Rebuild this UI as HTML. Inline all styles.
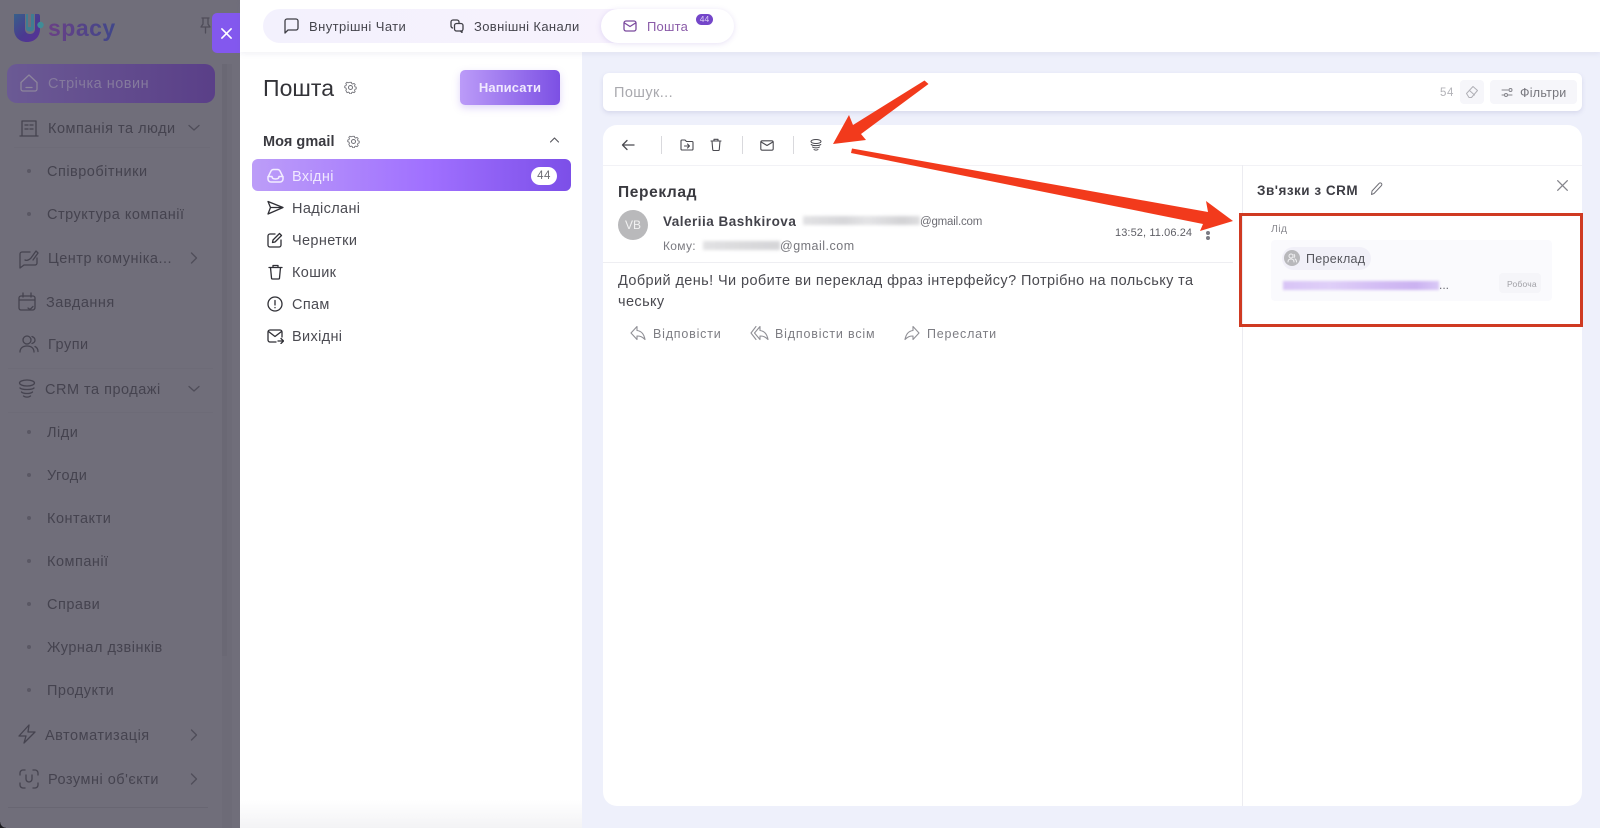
<!DOCTYPE html>
<html lang="uk"><head><meta charset="utf-8"><title>Пошта</title>
<style>
*{box-sizing:border-box}
html,body{margin:0;padding:0;width:1600px;height:828px;overflow:hidden;background:#fff}
body{font-family:"Liberation Sans",sans-serif;position:relative;color:#3f3f46}
.a{position:absolute;white-space:nowrap}
.t{position:absolute;white-space:nowrap;line-height:20px;transform:translateY(-9px)}
svg.i{position:absolute;fill:none;stroke:currentColor;stroke-width:1.6;stroke-linecap:round;stroke-linejoin:round}
#root{position:absolute;inset:0;filter:blur(.35px)}
.s{color:#45434f;font-size:14.5px;letter-spacing:.5px}
.dot{position:absolute;width:4px;height:4px;border-radius:50%;background:#5a5864;left:27px}
.m{font-size:14.5px;letter-spacing:.35px;color:#4b4b52;left:292px}
</style></head><body><div id="root">

<!-- sidebar -->
<div class="a" style="left:0;top:0;width:240px;height:828px;background:#706e7a"></div>
<div class="a" style="left:222px;top:64px;width:10px;height:764px;background:#6d6b77"></div>
<div class="a" style="left:222px;top:64px;width:5px;height:592px;background:#6a6874"></div>
<div class="a" style="left:7px;top:64px;width:208px;height:39px;border-radius:10px;background:linear-gradient(90deg,#6b5a94,#5a3f88)"></div>
<div class="a" style="left:14px;top:147px;width:196px;height:1px;background:#6d6b77"></div>
<div class="a" style="left:8px;top:368px;width:205px;height:1px;background:#6d6b77"></div>
<div class="a" style="left:8px;top:412px;width:205px;height:1px;background:#6d6b77"></div>
<div class="a" style="left:8px;top:807px;width:200px;height:1px;background:#686672"></div>
<div class="a" style="left:0;top:822px;width:6px;height:6px;background:radial-gradient(circle at 100% 0,transparent 5.500px,#1c1c20 6px)"></div>

<!-- logo -->
<svg class="a" style="left:13px;top:12px" width="106" height="32" viewBox="0 0 106 32">
<defs><linearGradient id="lg" x1="0" y1="0" x2="1" y2="1"><stop offset="0" stop-color="#37608a"/><stop offset=".55" stop-color="#4a3a90"/><stop offset="1" stop-color="#5a2f98"/></linearGradient>
<linearGradient id="ts" x1="0" y1="0" x2="1" y2="0"><stop offset="0" stop-color="#6a3f86"/><stop offset="1" stop-color="#40478a"/></linearGradient></defs>
<path d="M1 2h11v15c0 3 2 5 5 5s5-2 5-5V2h3c1.500 0 2 1 2 2.500V17c0 8-5.500 13-13 13S1 25 1 17z" fill="url(#lg)"/>
<path d="M13 2h8v14c0 2.200-1.500 3.500-4 3.500S13 18.200 13 16z" fill="#3f7d92"/>
<rect x="15" y="1" width="3" height="14" fill="#706e7a"/>
<circle cx="27.500" cy="13" r="3.200" fill="#3f8d97"/>
<text x="35" y="24" font-family="Liberation Sans,sans-serif" font-size="23" font-weight="700" letter-spacing=".5" fill="url(#ts)">spacy</text>
</svg>
<svg class="i" style="left:198px;top:16px;color:#4f4d59;stroke-width:1.300" width="15" height="18" viewBox="0 0 15 18"><path d="M4 2h7M5 2v6L3 11h9l-2-3V2M7.500 11v6"/></svg>
<div class="a" style="left:212px;top:13px;width:28px;height:40px;background:#8358ee;border-radius:5px 0 0 5px"></div>
<svg class="i" style="left:221px;top:28px;color:#fff;stroke-width:1.800" width="11" height="11" viewBox="0 0 12 12"><path d="M1 1l10 10M11 1L1 11"/></svg>

<svg class="i" style="left:19px;top:73px;color:#8d859c;stroke-width:1.300" width="20" height="20" viewBox="0 0 20 20"><path d="M2 9.500 10 2l8 7.500V16a2 2 0 0 1-2 2H4a2 2 0 0 1-2-2zM7 14.500h6"/></svg>
<div class="t s" style="left:48px;top:83px;color:#857a9d">Стрічка новин</div>

<svg class="i" style="left:19px;top:119px;color:#45434f;stroke-width:1.300" width="20" height="18" viewBox="0 0 20 18"><path d="M1 17h18M3 17V2h14v15M6 6h3M11 6h3M6 10h3M11 10h3"/></svg>
<div class="t s" style="left:48px;top:128px">Компанія та люди</div>
<svg class="i" style="left:188px;top:124px;color:#4f4d59;stroke-width:1.300" width="12" height="8" viewBox="0 0 12 8"><path d="M1 1.500 6 6l5-4.500"/></svg>

<span class="dot" style="top:169px"></span><div class="t s" style="left:47px;top:171px">Співробітники</div>
<span class="dot" style="top:212px"></span><div class="t s" style="left:47px;top:214px">Структура компанії</div>

<svg class="i" style="left:19px;top:248px;color:#45434f;stroke-width:1.300" width="20" height="21" viewBox="0 0 20 21"><path d="M11 4H3a2 2 0 0 0-2 2v14l4-3h11a2 2 0 0 0 2-2V10M6 12c2 1 4 0 6-2l5-7 2 2-5 7"/></svg>
<div class="t s" style="left:48px;top:258px">Центр комуніка...</div>
<svg class="i" style="left:190px;top:252px;color:#4f4d59;stroke-width:1.300" width="8" height="12" viewBox="0 0 8 12"><path d="M1.500 1 6.500 6l-5 5"/></svg>

<svg class="i" style="left:18px;top:292px;color:#45434f;stroke-width:1.300" width="18" height="20" viewBox="0 0 18 20"><path d="M1 6a2 2 0 0 1 2-2h12a2 2 0 0 1 2 2v9a3 3 0 0 1-2 3H3a2 2 0 0 1-2-2zM1 8h16M5 1v4M13 1v4M10 16l2 1.500 3-3"/></svg>
<div class="t s" style="left:46px;top:302px">Завдання</div>

<svg class="i" style="left:19px;top:335px;color:#45434f;stroke-width:1.300" width="20" height="18" viewBox="0 0 20 18"><circle cx="8" cy="5" r="4"/><path d="M1 17c0-4 3-6 7-6s7 2 7 6M13 1.500c2 .8 3 2 3 3.500s-1 2.800-3 3.500M16 11.500c2 1 3 3 3 5"/></svg>
<div class="t s" style="left:48px;top:344px">Групи</div>

<svg class="i" style="left:18px;top:379px;color:#45434f;stroke-width:1.300" width="18" height="20" viewBox="0 0 18 20"><ellipse cx="9" cy="4" rx="7.500" ry="3"/><path d="M2 9c2 2 12 2 14 0M3.500 13c2 2 9 2 11 0M5.500 17c2 1.500 5 1.500 7 0"/></svg>
<div class="t s" style="left:45px;top:389px">CRM та продажі</div>
<svg class="i" style="left:188px;top:385px;color:#4f4d59;stroke-width:1.300" width="12" height="8" viewBox="0 0 12 8"><path d="M1 1.500 6 6l5-4.500"/></svg>

<span class="dot" style="top:430px"></span><div class="t s" style="left:47px;top:432px">Ліди</div>
<span class="dot" style="top:473px"></span><div class="t s" style="left:47px;top:475px">Угоди</div>
<span class="dot" style="top:516px"></span><div class="t s" style="left:47px;top:518px">Контакти</div>
<span class="dot" style="top:559px"></span><div class="t s" style="left:47px;top:561px">Компанії</div>
<span class="dot" style="top:602px"></span><div class="t s" style="left:47px;top:604px">Справи</div>
<span class="dot" style="top:645px"></span><div class="t s" style="left:47px;top:647px">Журнал дзвінків</div>
<span class="dot" style="top:688px"></span><div class="t s" style="left:47px;top:690px">Продукти</div>

<svg class="i" style="left:18px;top:724px;color:#45434f;stroke-width:1.300" width="18" height="20" viewBox="0 0 18 20"><path d="M11 1 1 12h7l-2 7 11-11h-7z"/></svg>
<div class="t s" style="left:45px;top:735px">Автоматизація</div>
<svg class="i" style="left:190px;top:729px;color:#4f4d59;stroke-width:1.300" width="8" height="12" viewBox="0 0 8 12"><path d="M1.500 1 6.500 6l-5 5"/></svg>

<svg class="i" style="left:19px;top:769px;color:#45434f;stroke-width:1.300" width="20" height="20" viewBox="0 0 20 20"><path d="M1 6V4a3 3 0 0 1 3-3h2M14 1h2a3 3 0 0 1 3 3v2M1 14v2a3 3 0 0 0 3 3h2M14 19h2a3 3 0 0 0 3-3v-2M7 6v4a3 3 0 0 0 6 0V6"/></svg>
<div class="t s" style="left:48px;top:779px">Розумні об'єкти</div>
<svg class="i" style="left:190px;top:773px;color:#4f4d59;stroke-width:1.300" width="8" height="12" viewBox="0 0 8 12"><path d="M1.500 1 6.500 6l-5 5"/></svg>

<!-- main backgrounds -->
<div class="a" style="left:582px;top:52px;width:1018px;height:776px;background:#eef0fb"></div>
<div class="a" style="left:240px;top:800px;width:342px;height:28px;background:linear-gradient(180deg,#fff,#f3f3f5)"></div>
<div class="a" style="left:240px;top:0;width:1360px;height:52px;background:#fff;box-shadow:0 2px 5px rgba(120,120,170,.1)"></div>

<!-- tabs -->
<div class="a" style="left:263px;top:9px;width:440px;height:34px;border-radius:17px;background:linear-gradient(90deg,#f3f1fd,#f8f2fd)"></div>
<div class="a" style="left:601px;top:9px;width:133px;height:34px;border-radius:17px;background:#fff;box-shadow:0 1px 6px rgba(120,90,200,.18)"></div>
<svg class="i" style="left:284px;top:18px;color:#3f3f46;stroke-width:1.300" width="15" height="16" viewBox="0 0 15 16"><path d="M3 1h9a2 2 0 0 1 2 2v7a2 2 0 0 1-2 2H4l-3 3V3a2 2 0 0 1 2-2z"/></svg>
<div class="t" style="left:309px;top:26px;font-size:13px;letter-spacing:.42px;color:#45454d">Внутрішні Чати</div>
<svg class="i" style="left:450px;top:19px;color:#3f3f46;stroke-width:1.300" width="14" height="14" viewBox="0 0 14 14"><path d="M9 3.500V3a2 2 0 0 0-2-2H3a2 2 0 0 0-2 2v4c0 1 .5 1.500 1.500 2"/><rect x="4.500" y="4.500" width="8.500" height="7.500" rx="2"/><path d="m10.500 12 1.500 1.500V12"/></svg>
<div class="t" style="left:474px;top:26px;font-size:13px;letter-spacing:.36px;color:#45454d">Зовнішні Канали</div>
<svg class="i" style="left:623px;top:20px;color:#7b4a9e;stroke-width:1.300" width="14" height="12" viewBox="0 0 14 12"><rect x="1" y="1" width="12" height="10" rx="2"/><path d="m1.500 3 5.500 3.500L12.500 3"/></svg>
<div class="t" style="left:647px;top:26px;font-size:13px;letter-spacing:.2px;color:#8a5ba8">Пошта</div>
<div class="a" style="left:696px;top:14px;width:17px;height:11px;border-radius:6px;background:#7446c9;color:#ddd0f5;font-size:8.500px;line-height:11px;text-align:center">44</div>

<!-- left panel -->
<div class="t" style="left:263px;top:87px;font-size:23px;letter-spacing:.05px;color:#333338">Пошта</div>
<svg class="i" style="left:344px;top:81px;color:#6f6f76;stroke-width:1" width="13" height="13" viewBox="0 0 13 13"><path d="M5.500.8h2l.4 1.500 1.400.6 1.300-.8 1.400 1.400-.8 1.300.6 1.400 1.400.4v2l-1.400.4-.6 1.400.8 1.300-1.400 1.400-1.300-.8-1.400.6-.4 1.400h-2l-.4-1.400-1.400-.6-1.300.8L.9 10.300l.8-1.300-.6-1.400L-.3 7.200v-2l1.400-.4.6-1.400L.9 2.100 2.300.7l1.300.8 1.400-.6z" transform="translate(1 .6) scale(.85)"/><circle cx="6.500" cy="6.500" r="2"/></svg>
<div class="a" style="left:460px;top:70px;width:100px;height:35px;border-radius:5px;background:linear-gradient(90deg,#bb9bf8,#7c50e4);box-shadow:0 3px 8px rgba(130,90,230,.25);color:#f0e9fe;font-size:13px;font-weight:700;letter-spacing:.1px;line-height:36px;text-align:center">Написати</div>

<div class="t" style="left:263px;top:141px;font-size:14.500px;font-weight:700;letter-spacing:.05px;color:#3a3a40">Моя gmail</div>
<svg class="i" style="left:347px;top:135px;color:#6f6f76;stroke-width:1" width="13" height="13" viewBox="0 0 13 13"><path d="M5.500.8h2l.4 1.500 1.400.6 1.300-.8 1.400 1.400-.8 1.300.6 1.400 1.400.4v2l-1.400.4-.6 1.400.8 1.300-1.400 1.400-1.300-.8-1.400.6-.4 1.400h-2l-.4-1.400-1.400-.6-1.300.8L.9 10.300l.8-1.300-.6-1.400L-.3 7.200v-2l1.400-.4.6-1.400L.9 2.100 2.300.7l1.300.8 1.400-.6z" transform="translate(1 .6) scale(.85)"/><circle cx="6.500" cy="6.500" r="2"/></svg>
<svg class="i" style="left:550px;top:137px;color:#55555c;stroke-width:1.100" width="9" height="6" viewBox="0 0 9 6"><path d="M.5 5 4.500 1l4 4"/></svg>

<div class="a" style="left:252px;top:159px;width:319px;height:32px;border-radius:6px;background:linear-gradient(90deg,#bc9df8,#a070ff 55%,#7c4fe8)"></div>
<svg class="i" style="left:267px;top:168px;color:#f3edff;stroke-width:1.500" width="17" height="15" viewBox="0 0 17 15"><path d="M1 9 4 3a3 3 0 0 1 2.500-1.500h4A3 3 0 0 1 13 3l3 6v2a3 3 0 0 1-3 3H4a3 3 0 0 1-3-3zM1 8.500h4c0 2 1.500 2.500 3.500 2.500s3.500-.5 3.500-2.500h4"/></svg>
<div class="t m" style="top:176px;color:#f0e8ff">Вхідні</div>
<div class="a" style="left:531px;top:167px;width:26px;height:18px;border-radius:9px;background:#fff;color:#6b6b72;font-size:11.500px;letter-spacing:.5px;line-height:18px;text-align:center">44</div>

<svg class="i" style="left:267px;top:200px;color:#2f2f35;stroke-width:1.300" width="17" height="15" viewBox="0 0 17 15"><path d="M1 1.500 16 7.500 1 14l2.500-6.500zM3.500 7.500H16"/></svg>
<div class="t m" style="top:208px">Надіслані</div>
<svg class="i" style="left:267px;top:232px;color:#2f2f35;stroke-width:1.300" width="16" height="16" viewBox="0 0 16 16"><path d="M8 2H3a2 2 0 0 0-2 2v9a2 2 0 0 0 2 2h9a2 2 0 0 0 2-2V8"/><path d="M5.500 10.500 6 8l6.500-6.500 2 2L8 10z"/></svg>
<div class="t m" style="top:240px">Чернетки</div>
<svg class="i" style="left:268px;top:264px;color:#2f2f35;stroke-width:1.300" width="15" height="16" viewBox="0 0 15 16"><path d="M1 3.500h13M5 3.500V1.500h5v2M2.500 3.500l1 10.500a1 1 0 0 0 1 1h6a1 1 0 0 0 1-1l1-10.500"/></svg>
<div class="t m" style="top:272px">Кошик</div>
<svg class="i" style="left:267px;top:296px;color:#2f2f35;stroke-width:1.300" width="16" height="16" viewBox="0 0 16 16"><circle cx="8" cy="8" r="7"/><path d="M8 4.500V9M8 11.500v.2"/></svg>
<div class="t m" style="top:304px">Спам</div>
<svg class="i" style="left:267px;top:329px;color:#2f2f35;stroke-width:1.300" width="17" height="15" viewBox="0 0 17 15"><path d="M9 13H3a2 2 0 0 1-2-2V3a2 2 0 0 1 2-2h10a2 2 0 0 1 2 2v5"/><path d="m1.500 2.500 6.500 5 6.500-5M11 12h5M14 9.500l2.500 2.500-2.500 2.500"/></svg>
<div class="t m" style="top:336px">Вихідні</div>

<!-- search -->
<div class="a" style="left:603px;top:73px;width:979px;height:38px;border-radius:6px;background:#fff;box-shadow:0 2px 5px rgba(110,110,170,.18)"></div>
<div class="t" style="left:614px;top:92px;font-size:14.500px;letter-spacing:.4px;color:#a9a9ae">Пошук...</div>
<div class="t" style="left:1440px;top:92px;font-size:11.500px;letter-spacing:.6px;color:#b3b3b8">54</div>
<div class="a" style="left:1460px;top:80px;width:24px;height:24px;border-radius:4px;background:#f6f6fa"></div>
<svg class="i" style="left:1465px;top:85px;color:#b0b0b6;stroke-width:1" width="14" height="14" viewBox="0 0 14 14"><path d="M1.500 8.500 8 1.500l4.500 4-6 7H4zM4.500 5.500l5 4.500"/></svg>
<div class="a" style="left:1490px;top:80px;width:87px;height:24px;border-radius:4px;background:#f6f6fa"></div>
<svg class="i" style="left:1501px;top:87px;color:#85858c;stroke-width:1" width="12" height="10" viewBox="0 0 12 10"><path d="M1 3h6M1 8h2"/><circle cx="9.500" cy="3" r="1.500"/><circle cx="5" cy="8" r="1.500"/><path d="M7 8h4"/></svg>
<div class="t" style="left:1520px;top:92px;font-size:12.500px;letter-spacing:.25px;color:#76767d">Фільтри</div>

<!-- mail card -->
<div class="a" style="left:603px;top:125px;width:979px;height:681px;border-radius:14px;background:#fff"></div>
<div class="a" style="left:603px;top:165px;width:979px;height:1px;background:#f2f2f6"></div>
<div class="a" style="left:1242px;top:165px;width:1px;height:641px;background:#ececf1"></div>
<div class="a" style="left:603px;top:262px;width:630px;height:1px;background:#eeeef2"></div>

<svg class="i" style="left:621px;top:139px;color:#4a4a50;stroke-width:1.300" width="14" height="12" viewBox="0 0 14 12"><path d="M13 6H1.500M6 1.500 1.500 6 6 10.500"/></svg>
<div class="a" style="left:661px;top:136px;width:1px;height:18px;background:#d9d9dd"></div>
<svg class="i" style="left:680px;top:139px;color:#4a4a50;stroke-width:1.100" width="14" height="12" viewBox="0 0 14 12"><path d="M1 2a1 1 0 0 1 1-1h3l1.500 1.500H12a1 1 0 0 1 1 1V10a1 1 0 0 1-1 1H2a1 1 0 0 1-1-1zM4.500 7h5M7.500 5l2 2-2 2"/></svg>
<svg class="i" style="left:710px;top:138px;color:#4a4a50;stroke-width:1.100" width="12" height="13" viewBox="0 0 12 13"><path d="M1 3h10M4 3V1.300h4V3M2 3l.7 8.500a1 1 0 0 0 1 1h4.600a1 1 0 0 0 1-1L10 3"/></svg>
<div class="a" style="left:742px;top:136px;width:1px;height:18px;background:#d9d9dd"></div>
<svg class="i" style="left:760px;top:140px;color:#4a4a50;stroke-width:1.100" width="14" height="11" viewBox="0 0 14 11"><rect x=".8" y=".8" width="12.400" height="9.400" rx="1.500"/><path d="m1.200 2 5.800 3.500L12.800 2"/></svg>
<div class="a" style="left:793px;top:136px;width:1px;height:18px;background:#d9d9dd"></div>
<svg class="i" style="left:810px;top:139px;color:#4a4a50;stroke-width:1" width="12" height="13" viewBox="0 0 12 13"><ellipse cx="6" cy="2.500" rx="5" ry="2"/><path d="M1.200 5.500c1.500 1.500 8 1.500 9.600 0M2.500 8c1.500 1.200 5.500 1.200 7 0M4 10.500c1 .8 3 .8 4 0"/></svg>

<div class="t" style="left:618px;top:192px;font-size:15.500px;font-weight:700;letter-spacing:.62px;color:#3a3a40">Переклад</div>
<div class="a" style="left:618px;top:210px;width:30px;height:30px;border-radius:50%;background:#b9b9bb;color:#f2f2f2;font-size:12px;line-height:30px;text-align:center">VB</div>
<div class="t" style="left:663px;top:221px;font-size:13.500px;font-weight:700;letter-spacing:.5px;color:#42424a">Valeriia Bashkirova</div>
<div class="a" style="left:803px;top:216px;width:117px;height:9px;background:linear-gradient(90deg,#e2e2e4,#d6d6d9 35%,#e4e4e6 55%,#d2d2d5 85%,#dedee0);filter:blur(1.500px)"></div>
<div class="t" style="left:920px;top:221px;font-size:11.500px;letter-spacing:-.2px;color:#6d6d74">@gmail.com</div>
<div class="t" style="left:663px;top:245px;font-size:12px;letter-spacing:.3px;color:#7a7a80">Кому:</div>
<div class="a" style="left:703px;top:241px;width:77px;height:9px;background:linear-gradient(90deg,#e2e2e4,#dadadc 50%,#d4d4d7);filter:blur(1.500px)"></div>
<div class="t" style="left:780px;top:245px;font-size:12.500px;letter-spacing:.5px;color:#76767c">@gmail.com</div>
<div class="t" style="left:1115px;top:232px;font-size:11px;letter-spacing:.1px;color:#5f5f66">13:52, 11.06.24</div>
<div class="a" style="left:1206px;top:231px;width:4px;height:4px;border-radius:50%;background:#7b7b83"></div>
<div class="a" style="left:1206px;top:236px;width:4px;height:4px;border-radius:50%;background:#7b7b83"></div>

<div class="t" style="left:618px;top:280px;font-size:14.500px;letter-spacing:.4px;color:#4a4a50">Добрий день! Чи робите ви переклад фраз інтерфейсу? Потрібно на польську та</div>
<div class="t" style="left:618px;top:301px;font-size:14.500px;letter-spacing:.4px;color:#4a4a50">чеську</div>

<svg class="i" style="left:630px;top:325px;color:#909096;stroke-width:1.100" width="16" height="16" viewBox="0 0 16 16"><path d="M7 1.500 1 8l6 6.500V11c3 0 5 .5 8 3.500C14 9 11 6 7 5.500z"/></svg>
<div class="t" style="left:653px;top:333px;font-size:12.500px;letter-spacing:.8px;color:#7d7d83">Відповісти</div>
<svg class="i" style="left:750px;top:325px;color:#909096;stroke-width:1.100" width="19" height="16" viewBox="0 0 19 16"><path d="M6 1.500 1 8l5 6.500M10 1.500 4.500 8l5.500 6.500V11c3 0 5 .5 8 3.500C17 9 14 6 10 5.500z"/></svg>
<div class="t" style="left:775px;top:333px;font-size:12.500px;letter-spacing:.82px;color:#7d7d83">Відповісти всім</div>
<svg class="i" style="left:904px;top:325px;color:#909096;stroke-width:1.100" width="16" height="16" viewBox="0 0 16 16"><path d="M9 1.500 15 8l-6 6.500V11c-3 0-5 .5-8 3.500C2 9 5 6 9 5.500z"/></svg>
<div class="t" style="left:927px;top:333px;font-size:12.500px;letter-spacing:.8px;color:#7d7d83">Переслати</div>

<!-- CRM panel -->
<div class="t" style="left:1257px;top:190px;font-size:13.500px;font-weight:700;letter-spacing:.5px;color:#3d3d44">Зв'язки з CRM</div>
<svg class="i" style="left:1370px;top:182px;color:#707077;stroke-width:1" width="13" height="14" viewBox="0 0 13 14"><path d="M2 9 9 1.500a1.500 1.500 0 0 1 2.500 2L4 11.500l-2.500 1z"/></svg>
<svg class="i" style="left:1557px;top:180px;color:#85858c;stroke-width:1.300" width="11" height="11" viewBox="0 0 11 11"><path d="m.7.700 9.600 9.600M10.300.7.700 10.300"/></svg>

<div class="t" style="left:1271px;top:228px;font-size:10.500px;letter-spacing:.3px;color:#8a8a90">Лід</div>
<div class="a" style="left:1271px;top:240px;width:281px;height:61px;border-radius:4px;background:#fafafd"></div>
<div class="a" style="left:1282px;top:247px;width:89px;height:23px;border-radius:12px;background:#f1f0f8"></div>
<div class="a" style="left:1284px;top:250px;width:16px;height:16px;border-radius:50%;background:#b8b8bb"></div>
<svg class="i" style="left:1287px;top:253px;color:#f0f0f2;stroke-width:1" width="10" height="10" viewBox="0 0 10 10"><circle cx="4" cy="3" r="2"/><path d="M1 9c0-2 1.300-3 3-3s3 1 3 3M7 1.500c1 .5 1 2.500 0 3M8 6c1 .5 1.500 1.500 1.500 3"/></svg>
<div class="t" style="left:1306px;top:258px;font-size:12.500px;letter-spacing:.3px;color:#56565d">Переклад</div>
<div class="a" style="left:1283px;top:281px;width:156px;height:9px;background:linear-gradient(90deg,#d8c4f6,#dfcff8 30%,#d3bdf4 60%,#cbb2f1 85%,#d9c8f6);filter:blur(1.200px)"></div>
<div class="t" style="left:1439px;top:284px;font-size:12px;color:#6a6a72">...</div>
<div class="a" style="left:1499px;top:273px;width:42px;height:20px;border-radius:4px;background:#f5f5f9"></div>
<div class="t" style="left:1507px;top:283px;font-size:8.500px;letter-spacing:.2px;color:#a0a0a6">Робоча</div>

<!-- annotations -->
<div class="a" style="left:1239px;top:213px;width:344px;height:114px;border:3px solid #cf3a22"></div>
<svg class="a" style="left:0;top:0" width="1600" height="828" viewBox="0 0 1600 828">
<polygon points="924.500,80.500 928.500,84 861,134 866,140 833,144 849,115 853,125" fill="#f23a1c"/>
<polygon points="852,148.500 1208,212 1206,201 1233,221 1200,231 1203,224 851,153" fill="#f23a1c"/>
</svg>
</div></body></html>
